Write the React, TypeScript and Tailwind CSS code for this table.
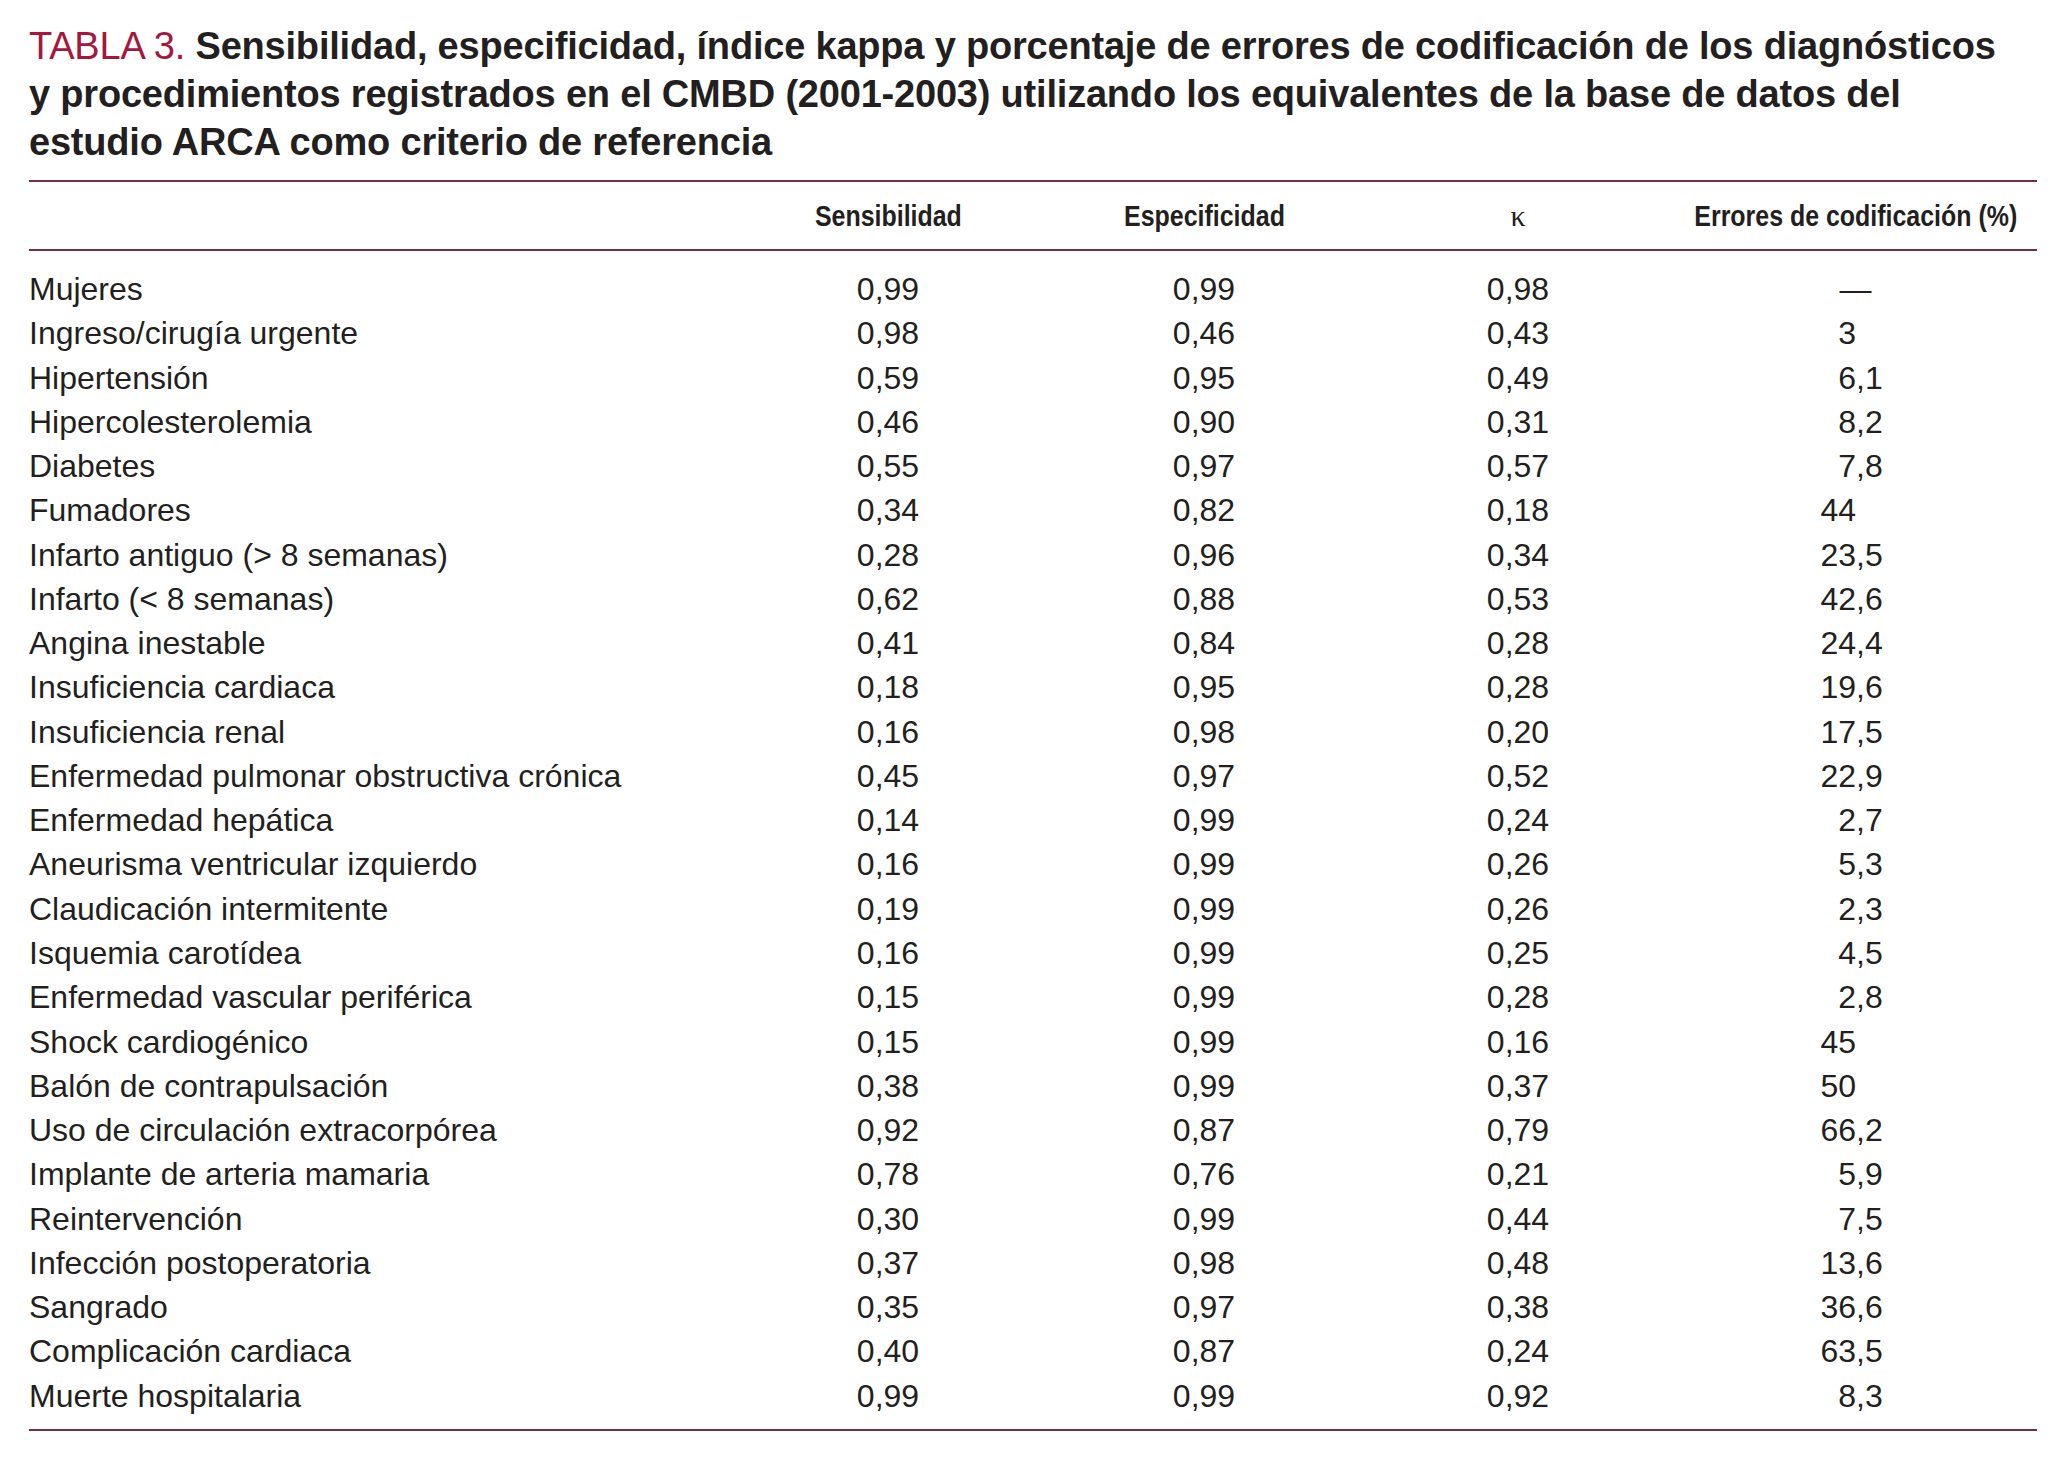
import React from 'react';

type Row = {
    label: string;
    sens: string;
    esp: string;
    kappa: string;
    err: string;
};

const rows: Row[] = [
    { label: 'Mujeres', sens: '0,99', esp: '0,99', kappa: '0,98', err: '—' },
    { label: 'Ingreso/cirugía urgente', sens: '0,98', esp: '0,46', kappa: '0,43', err: '3' },
    { label: 'Hipertensión', sens: '0,59', esp: '0,95', kappa: '0,49', err: '6,1' },
    { label: 'Hipercolesterolemia', sens: '0,46', esp: '0,90', kappa: '0,31', err: '8,2' },
    { label: 'Diabetes', sens: '0,55', esp: '0,97', kappa: '0,57', err: '7,8' },
    { label: 'Fumadores', sens: '0,34', esp: '0,82', kappa: '0,18', err: '44' },
    { label: 'Infarto antiguo (> 8 semanas)', sens: '0,28', esp: '0,96', kappa: '0,34', err: '23,5' },
    { label: 'Infarto (< 8 semanas)', sens: '0,62', esp: '0,88', kappa: '0,53', err: '42,6' },
    { label: 'Angina inestable', sens: '0,41', esp: '0,84', kappa: '0,28', err: '24,4' },
    { label: 'Insuficiencia cardiaca', sens: '0,18', esp: '0,95', kappa: '0,28', err: '19,6' },
    { label: 'Insuficiencia renal', sens: '0,16', esp: '0,98', kappa: '0,20', err: '17,5' },
    { label: 'Enfermedad pulmonar obstructiva crónica', sens: '0,45', esp: '0,97', kappa: '0,52', err: '22,9' },
    { label: 'Enfermedad hepática', sens: '0,14', esp: '0,99', kappa: '0,24', err: '2,7' },
    { label: 'Aneurisma ventricular izquierdo', sens: '0,16', esp: '0,99', kappa: '0,26', err: '5,3' },
    { label: 'Claudicación intermitente', sens: '0,19', esp: '0,99', kappa: '0,26', err: '2,3' },
    { label: 'Isquemia carotídea', sens: '0,16', esp: '0,99', kappa: '0,25', err: '4,5' },
    { label: 'Enfermedad vascular periférica', sens: '0,15', esp: '0,99', kappa: '0,28', err: '2,8' },
    { label: 'Shock cardiogénico', sens: '0,15', esp: '0,99', kappa: '0,16', err: '45' },
    { label: 'Balón de contrapulsación', sens: '0,38', esp: '0,99', kappa: '0,37', err: '50' },
    { label: 'Uso de circulación extracorpórea', sens: '0,92', esp: '0,87', kappa: '0,79', err: '66,2' },
    { label: 'Implante de arteria mamaria', sens: '0,78', esp: '0,76', kappa: '0,21', err: '5,9' },
    { label: 'Reintervención', sens: '0,30', esp: '0,99', kappa: '0,44', err: '7,5' },
    { label: 'Infección postoperatoria', sens: '0,37', esp: '0,98', kappa: '0,48', err: '13,6' },
    { label: 'Sangrado', sens: '0,35', esp: '0,97', kappa: '0,38', err: '36,6' },
    { label: 'Complicación cardiaca', sens: '0,40', esp: '0,87', kappa: '0,24', err: '63,5' },
    { label: 'Muerte hospitalaria', sens: '0,99', esp: '0,99', kappa: '0,92', err: '8,3' },
];

const cols = 'grid grid-cols-[701px_316px_316px_312px_363px]';

// errores column is aligned on the decimal comma
function ErrorCell({ value }: { value: string }) {
    if (value === '—') {
        return <div className="text-center">—</div>;
    }
    const [int, frac] = value.split(',');
    return (
        <div className="flex">
            <span className="w-[182px] text-right">{int}</span>
            {frac && <span>,{frac}</span>}
        </div>
    );
}

// bold condensed look for the column heads
function Head({ children }: { children: React.ReactNode }) {
    return (
        <div className="flex justify-center">
            <span className="inline-block whitespace-nowrap scale-x-[0.86] origin-center">{children}</span>
        </div>
    );
}

export default function App() {
    return (
        <div className="min-h-screen bg-white text-[#231f20] font-['Liberation_Sans',Arial,sans-serif]">
            <div className="ml-[29px] w-[2008px] pt-[22px]">
                <h1 className="text-[38px] leading-[48px] font-bold tracking-[-0.2px] whitespace-nowrap">
                    <span className="font-normal text-[#a6163f]">TABLA 3. </span>
                    Sensibilidad, especificidad, índice kappa y porcentaje de errores de codificación de los diagnósticos
                    <br />
                    y procedimientos registrados en el CMBD (2001-2003) utilizando los equivalentes de la base de datos del
                    <br />
                    estudio ARCA como criterio de referencia
                </h1>

                <div className="mt-[14px] border-t-2 border-b-2 border-[#7b2a4a]">
                    <div className={`${cols} pt-[12px] pb-[11px] text-[29px] leading-[44px] font-bold`}>
                        <div />
                        <Head>Sensibilidad</Head>
                        <Head>Especificidad</Head>
                        <div className="text-center font-['Liberation_Serif',serif] font-normal text-[30px]">κ</div>
                        <Head>Errores de codificación (%)</Head>
                    </div>
                </div>

                <div className="pt-[16px] pb-[11px] border-b-2 border-[#7b2a4a] text-[32px] leading-[44.26px]">
                    {rows.map((r) => (
                        <div key={r.label} className={cols}>
                            <div>{r.label}</div>
                            <div className="text-center">{r.sens}</div>
                            <div className="text-center">{r.esp}</div>
                            <div className="text-center">{r.kappa}</div>
                            <ErrorCell value={r.err} />
                        </div>
                    ))}
                </div>
            </div>
        </div>
    );
}
